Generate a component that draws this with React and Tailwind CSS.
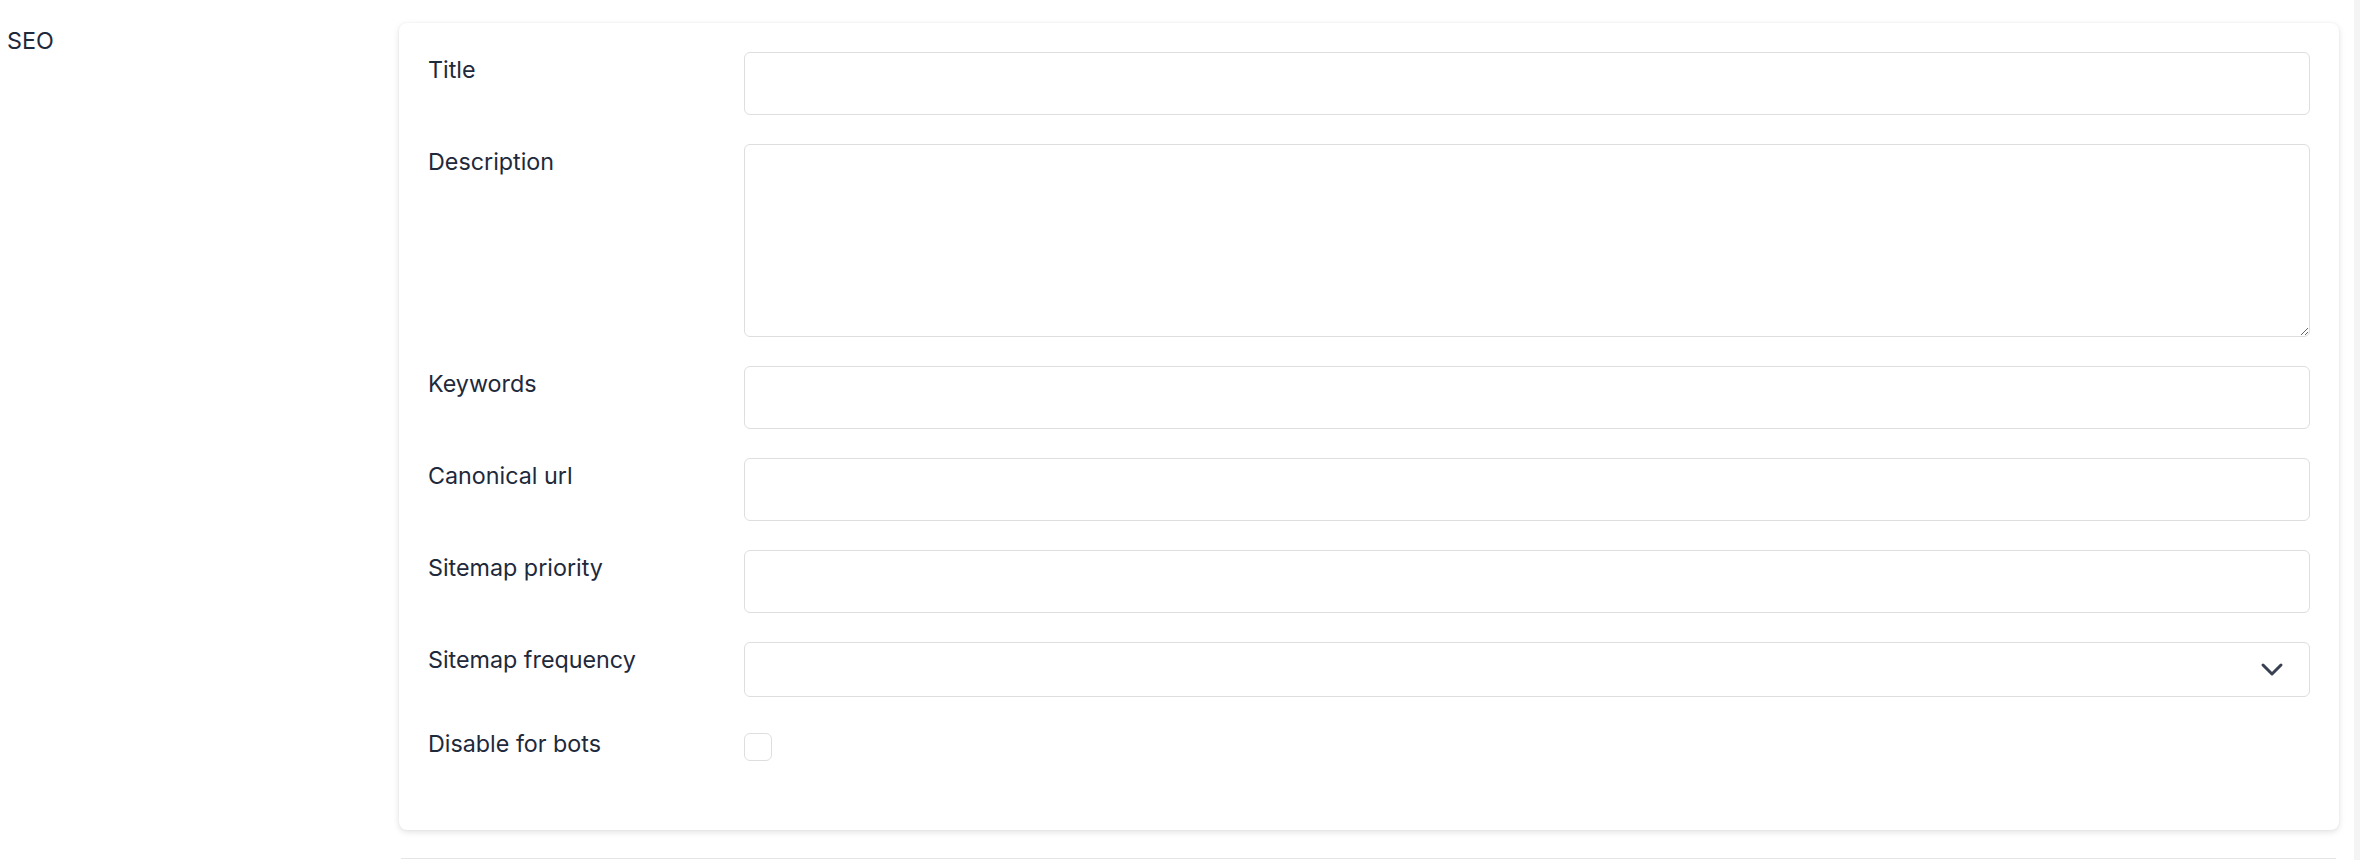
import React from "react";

const font = { fontFamily: "Inter, 'Noto Sans', sans-serif" };

function Label({ children }) {
  return (
    <div className="w-[316px] shrink-0 text-[23.3px] leading-[36px] text-[#1e293b]">
      {children}
    </div>
  );
}

function Row({ label, children, className = "" }) {
  return (
    <div className={"flex " + className}>
      <Label>{label}</Label>
      <div className="flex-1">{children}</div>
    </div>
  );
}

function TextInput() {
  return (
    <input
      type="text"
      className="block w-full h-[63px] rounded-[6px] border border-[#dedede] bg-white outline-none"
    />
  );
}

export default function App() {
  return (
    <div className="flex w-[2360px] h-[860px] bg-white overflow-hidden" style={font}>
      <div className="flex flex-1">
        <div className="w-[399px] shrink-0 pt-[23px] pl-[7px] text-[23.3px] leading-[36px] text-[#1e293b]">
          SEO
        </div>
        <div className="flex flex-col w-[1940px] pt-[23px]">
          <div className="bg-white rounded-[8px] shadow-[0_2px_6px_rgba(0,0,0,0.12),0_0_2px_rgba(0,0,0,0.05)] px-[29px] pt-[29px] pb-[68px]">
            <div className="flex flex-col gap-[29px]">
              <Row label="Title">
                <TextInput />
              </Row>
              <Row label="Description">
                <textarea className="block w-full h-[193px] rounded-[6px] border border-[#dedede] bg-white outline-none resize-y" />
              </Row>
              <Row label="Keywords">
                <TextInput />
              </Row>
              <Row label="Canonical url">
                <TextInput />
              </Row>
              <Row label="Sitemap priority">
                <TextInput />
              </Row>
              <Row label="Sitemap frequency">
                <div className="flex items-center justify-end w-full h-[55px] rounded-[6px] border border-[#dedede] bg-white pr-[25px]">
                  <svg width="24" height="16" viewBox="0 0 24 16" fill="none">
                    <polyline
                      points="3,3 12,12 21,3"
                      stroke="#374151"
                      strokeWidth="3"
                      strokeLinecap="round"
                      strokeLinejoin="round"
                    />
                  </svg>
                </div>
              </Row>
              <Row label="Disable for bots">
                <div className="mt-[7px] w-[28px] h-[28px] rounded-[6px] border border-[#dedede] bg-white" />
              </Row>
            </div>
          </div>
          <div className="mt-[28px] mx-[2px] w-[1935px] h-[1px] bg-[#e5e5e5]" />
        </div>
      </div>
      <div className="w-[6px] h-full bg-[#f4f4f4]" />
    </div>
  );
}
